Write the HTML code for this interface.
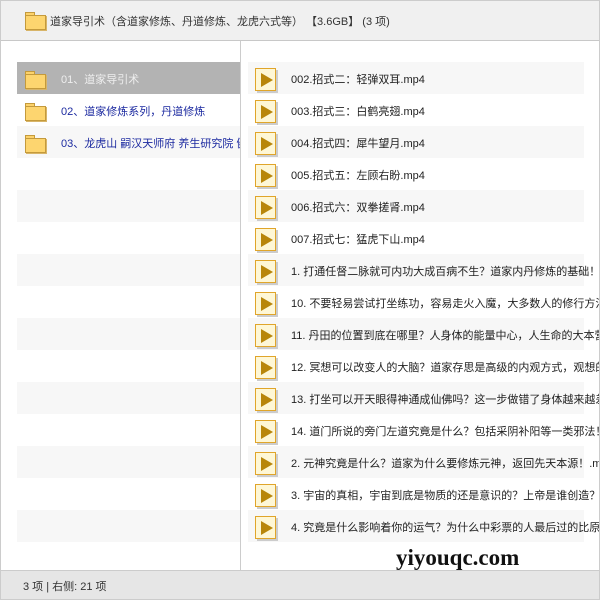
<!DOCTYPE html>
<html><head><meta charset="utf-8"><style>
*{margin:0;padding:0;box-sizing:border-box}
body{width:600px;height:600px;overflow:hidden;background:#fff;font-family:"Liberation Sans","Noto Sans CJK SC",sans-serif;font-size:11px;color:#222;position:relative}
.frame{position:absolute;left:0;top:0;width:600px;height:600px;border:1px solid #ccc;pointer-events:none}
.hdr{position:absolute;left:0;top:0;width:600px;height:41px;background:#f0f0f0;border:1px solid #ccc;border-bottom:1px solid #c8c8c8}
.hdr .t{position:absolute;left:49px;top:12px;font-size:11px;color:#333;white-space:nowrap}
.fold{position:absolute;width:19px;height:16px}
.fold:before{content:"";position:absolute;left:0;top:0;width:8px;height:4px;background:#fcd26b;border:1px solid #c49a3c;border-bottom:none}
.fold:after{content:"";position:absolute;left:0;top:3px;width:19px;height:13px;background:#fdd56f;border:1px solid #c49a3c;box-shadow:1px 1px 0 #d8b569}
.div{position:absolute;left:240px;top:41px;width:1px;height:530px;background:#ccc}
.lrow{position:absolute;left:17px;width:223px;height:32px;overflow:hidden}
.lrow .fold{left:8px;top:9px}
.lrow span{position:absolute;left:44px;top:9px;color:#1c2aa0;white-space:nowrap}
.rrow{position:absolute;left:248px;width:352px;height:32px;overflow:hidden}
.st:before{content:"";position:absolute;left:0;top:0;width:336px;height:32px;background:#f7f7f7}
.lrow.st{background:#f7f7f7}
.lrow.st:before{display:none}
.vid{position:absolute;left:7px;top:6px;width:21px;height:23px;background:#fef7d6;border:1px solid #e0a52a;box-shadow:2px 2px 0 #ccc}
.vid:after{content:"";position:absolute;left:5px;top:4px;border-left:12px solid #b8860b;border-top:7px solid transparent;border-bottom:7px solid transparent}
.rrow span{position:absolute;left:43px;top:9px;white-space:nowrap;color:#222}
.status{position:absolute;left:0;top:570px;width:600px;height:30px;background:#e6e6e6;border:1px solid #ccc}
.status span{position:absolute;left:22px;top:7px;color:#333;font-size:11px}
.wm{position:absolute;left:396px;top:545px;font-family:"Liberation Serif",serif;font-weight:bold;font-size:23px;color:#111;z-index:5}
</style></head><body>
<div class="hdr"><div class="fold" style="left:24px;top:11px"></div><div class="t">道家导引术（含道家修炼、丹道修炼、龙虎六式等） 【3.6GB】 (3 项)</div></div>
<div class="div"></div>

<div class="lrow" style="top:62px;background:#b3b3b3"><div class="fold"></div><span style="color:#eee">01、道家导引术</span></div>
<div class="lrow" style="top:94px"><div class="fold"></div><span>02、道家修炼系列，丹道修炼</span></div>
<div class="lrow st" style="top:126px"><div class="fold"></div><span>03、龙虎山 嗣汉天师府 养生研究院 健康</span></div>
<div class="lrow st" style="top:190px"></div>
<div class="lrow st" style="top:254px"></div>
<div class="lrow st" style="top:318px"></div>
<div class="lrow st" style="top:382px"></div>
<div class="lrow st" style="top:446px"></div>
<div class="lrow st" style="top:510px"></div>

<div class="rrow st" style="top:62px"><div class="vid"></div><span>002.招式二：轻弹双耳.mp4</span></div>
<div class="rrow" style="top:94px"><div class="vid"></div><span>003.招式三：白鹤亮翅.mp4</span></div>
<div class="rrow st" style="top:126px"><div class="vid"></div><span>004.招式四：犀牛望月.mp4</span></div>
<div class="rrow" style="top:158px"><div class="vid"></div><span>005.招式五：左顾右盼.mp4</span></div>
<div class="rrow st" style="top:190px"><div class="vid"></div><span>006.招式六：双拳搓肾.mp4</span></div>
<div class="rrow" style="top:222px"><div class="vid"></div><span>007.招式七：猛虎下山.mp4</span></div>
<div class="rrow st" style="top:254px"><div class="vid"></div><span>1. 打通任督二脉就可内功大成百病不生？道家内丹修炼的基础！.mp4</span></div>
<div class="rrow" style="top:286px"><div class="vid"></div><span>10. 不要轻易尝试打坐练功，容易走火入魔，大多数人的修行方法都错了.mp4</span></div>
<div class="rrow st" style="top:318px"><div class="vid"></div><span>11. 丹田的位置到底在哪里？人身体的能量中心，人生命的大本营.mp4</span></div>
<div class="rrow" style="top:350px"><div class="vid"></div><span>12. 冥想可以改变人的大脑？道家存思是高级的内观方式，观想的奥秘.mp4</span></div>
<div class="rrow st" style="top:382px"><div class="vid"></div><span>13. 打坐可以开天眼得神通成仙佛吗？这一步做错了身体越来越差！.mp4</span></div>
<div class="rrow" style="top:414px"><div class="vid"></div><span>14. 道门所说的旁门左道究竟是什么？包括采阴补阳等一类邪法！.mp4</span></div>
<div class="rrow st" style="top:446px"><div class="vid"></div><span>2. 元神究竟是什么？道家为什么要修炼元神，返回先天本源！.mp4</span></div>
<div class="rrow" style="top:478px"><div class="vid"></div><span>3. 宇宙的真相，宇宙到底是物质的还是意识的？上帝是谁创造？.mp4</span></div>
<div class="rrow st" style="top:510px"><div class="vid"></div><span>4. 究竟是什么影响着你的运气？为什么中彩票的人最后过的比原来还差.mp4</span></div>

<div class="status"><span>3 项 | 右侧: 21 项</span></div>
<div class="wm">yiyouqc.com</div>
<div class="frame"></div>
</body></html>
